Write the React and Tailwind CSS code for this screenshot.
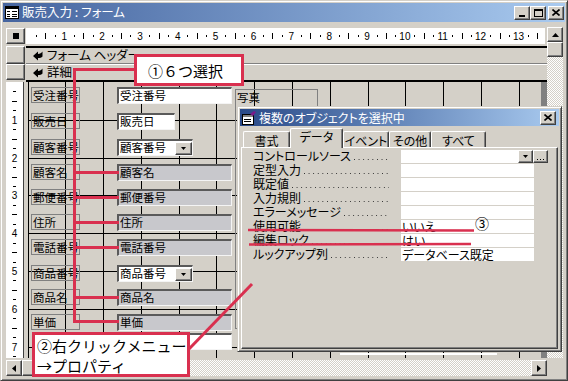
import React from "react";

const RAISED =
  "border border-t-white border-l-white border-r-[#404040] border-b-[#404040] shadow-[inset_-1px_-1px_0_#808080]";
const SUNKEN =
  "border-t-2 border-l-2 border-r border-b border-t-[#5a5a5a] border-l-[#5a5a5a] border-r-[#f4f4f4] border-b-[#f4f4f4]";
const CHECKER =
  "bg-[#d4d0c8] bg-[image:repeating-conic-gradient(#ffffff_0_25%,#d4d0c8_0_50%)] bg-[length:2px_2px]";
const RED = "#d9304f";

function Tri({ dir, s = 1 }) {
  const vert = dir === "up" || dir === "down";
  const w = vert ? 7 * s : 4 * s;
  const h = vert ? 4 * s : 7 * s;
  const d = {
    up: `M0 ${h} L${w / 2} 0 L${w} ${h} Z`,
    down: `M0 0 L${w} 0 L${w / 2} ${h} Z`,
    left: `M${w} 0 L${w} ${h} L0 ${h / 2} Z`,
    right: `M0 0 L0 ${h} L${w} ${h / 2} Z`,
  }[dir];
  return (
    <svg width={w} height={h} viewBox={`0 0 ${w} ${h}`}>
      <path d={d} fill="#000" />
    </svg>
  );
}

function FormIcon() {
  return (
    <svg width="14" height="13" viewBox="0 0 14 13">
      <rect x="0.5" y="0.5" width="13" height="12" fill="#fff" stroke="#000" />
      <rect x="1" y="1" width="12" height="2" fill="#000" />
      <path d="M2 5.5h3M2 8.5h3M2 10.5h3M7 5.5h5M7 8.5h5M7 10.5h5" stroke="#000" />
    </svg>
  );
}

function SheetIcon() {
  return (
    <svg width="16" height="14" viewBox="0 0 16 14">
      <rect x="1.5" y="3.5" width="11" height="10" fill="#fff" stroke="#000" />
      <rect x="2" y="4" width="10" height="2" fill="#808080" />
      <path d="M3 8.5h7M3 10.5h7" stroke="#000" />
      <path d="M9 3 L13 0 L15 1 L12 5 Z" fill="#7a1a8a" />
    </svg>
  );
}

function SecArrow() {
  return (
    <svg width="10" height="10" viewBox="0 0 10 10">
      <path d="M0 5 L5 0.5 L5 3 C7 3 8.5 2 9.5 0.5 L9.5 5.5 C8.5 7 7 7 5 7 L5 9.5 Z" fill="#000" />
    </svg>
  );
}

function HRuler() {
  const u = 37.85;
  const o = 0.4;
  const items = [];
  for (let k = 1; k <= 54; k++) {
    const x = o + (u * k) / 4;
    if (k % 4 === 0) {
      items.push(
        <text key={k} x={x} y={12} fontSize="10" textAnchor="middle" fontFamily="Liberation Sans, Arial, sans-serif" fill="#000">
          {k / 4}
        </text>
      );
    } else if (k % 2 === 0) {
      items.push(<rect key={k} x={Math.round(x)} y={5} width={1} height={6} fill="#000" />);
    } else {
      items.push(<rect key={k} x={Math.round(x)} y={7} width={1} height={2} fill="#000" />);
    }
  }
  return (
    <svg width="519" height="16" viewBox="0 0 519 16">
      {items}
    </svg>
  );
}

function VRuler() {
  const u = 37.8;
  const items = [];
  for (let k = 1; k <= 29; k++) {
    const y = (u * k) / 4;
    if (k % 4 === 0) {
      items.push(
        <text key={k} x={8.5} y={y + 4} fontSize="10" textAnchor="middle" fontFamily="Liberation Sans, Arial, sans-serif" fill="#000">
          {k / 4}
        </text>
      );
    } else if (k % 2 === 0) {
      items.push(<rect key={k} x={6} y={Math.round(y)} width={5} height={1} fill="#000" />);
    } else {
      items.push(<rect key={k} x={7} y={Math.round(y)} width={3} height={1} fill="#000" />);
    }
  }
  return (
    <svg width="17" height="276" viewBox="0 0 17 276">
      {items}
    </svg>
  );
}

function Grid() {
  const u = 37.8;
  const v = [];
  for (let n = 0; n <= 13; n++) {
    const x = Math.max(0, Math.round(-0.6 + u * n)) + 0.5;
    v.push(<path key={"v" + n} d={`M${x} 0 V276`} />);
  }
  for (let n = 1; n <= 7; n++) {
    const y = Math.round(u * n) + 0.5;
    v.push(<path key={"h" + n} d={`M0 ${y} H513`} />);
  }
  return (
    <svg className="absolute left-0 top-0" width="513" height="276" viewBox="0 0 513 276">
      <g stroke="#000" strokeWidth="1" shapeRendering="crispEdges">
        {v}
      </g>
    </svg>
  );
}

const rows = [
  { y: 5, t: "受注番号", w: 115, k: "white" },
  { y: 31, t: "販売日", w: 58, k: "white" },
  { y: 57, t: "顧客番号", w: 76, k: "combo" },
  { y: 82, t: "顧客名", w: 115, k: "gray" },
  { y: 107, t: "郵便番号", w: 115, k: "gray" },
  { y: 132, t: "住所", w: 115, k: "gray" },
  { y: 157, t: "電話番号", w: 115, k: "gray" },
  { y: 183, t: "商品番号", w: 76, k: "combo" },
  { y: 207, t: "商品名", w: 115, k: "gray" },
  { y: 232, t: "単価", w: 115, k: "gray" },
];

function TextBox({ y, w, k, t }) {
  const bg = k === "gray" ? "bg-[#c8c8cc]" : "bg-white";
  return (
    <div className={`absolute left-[89px] h-[17px] ${SUNKEN} ${bg} flex items-center`} style={{ top: y, width: w }}>
      <span className="pl-[1px] text-[11.5px] leading-none whitespace-nowrap">{t}</span>
      {k === "combo" && (
        <div className={`ml-auto w-[17px] h-[13px] bg-[#d4d0c8] ${RAISED} flex items-center justify-center`}>
          <svg width="5" height="3" viewBox="0 0 5 3">
            <path d="M0 0 H5 L2.5 3 Z" fill="#000" />
          </svg>
        </div>
      )}
    </div>
  );
}

const props = [
  ["コントロールソース", ""],
  ["定型入力", ""],
  ["既定値", ""],
  ["入力規則", ""],
  ["エラーメッセージ", ""],
  ["使用可能", "いいえ"],
  ["編集ロック", "はい"],
  ["ルックアップ列", "データベース既定"],
];

const tabs = [
  { t: "書式", w: 47 },
  { t: "データ", w: 53, sel: true },
  { t: "イベント", w: 46 },
  { t: "その他", w: 42 },
  { t: "すべて", w: 55 },
];

function Dialog() {
  return (
    <div className="absolute left-[236px] top-[105px] z-10 w-[325px] h-[246px] bg-[#d4d0c8] border border-t-[#d4d0c8] border-l-[#d4d0c8] border-r-[#404040] border-b-[#404040] shadow-[inset_1px_1px_0_#ffffff,inset_-1px_-1px_0_#808080] p-[2px] flex flex-col">
      <div className="h-[17px] flex items-center bg-linear-to-r from-[#2a4a88] to-[#a9caef] pl-[1px] pr-[3px]">
        <SheetIcon />
        <span className="ml-[2px] text-white text-[12px] leading-none whitespace-nowrap">複数のオブジェクトを選択中</span>
        <div className={`ml-auto w-[16px] h-[14px] bg-[#d4d0c8] ${RAISED} flex items-center justify-center`}>
          <svg width="8" height="7" viewBox="0 0 8 7">
            <path d="M0.5 0.5 L7.5 6.5 M7.5 0.5 L0.5 6.5" stroke="#000" strokeWidth="1.6" />
          </svg>
        </div>
      </div>
      <div className="mt-[2px] h-[19px] flex items-end pl-[3px] relative z-10">
        {tabs.map((tb) =>
          tb.sel ? (
            <div
              key={tb.t}
              className="h-[20px] -mb-[1px] bg-[#d4d0c8] border-t border-l border-r border-t-white border-l-white border-r-[#404040] shadow-[inset_-1px_0_0_#808080] rounded-t-[2px] flex items-start justify-center pt-[2px] text-[12px] leading-none"
              style={{ width: tb.w }}
            >
              {tb.t}
            </div>
          ) : (
            <div
              key={tb.t}
              className="h-[16px] bg-[#d4d0c8] border-t border-l border-r border-t-white border-l-white border-r-[#404040] shadow-[inset_-1px_0_0_#808080] rounded-t-[2px] flex items-center justify-center pt-[2px] text-[12px] leading-none"
              style={{ width: tb.w }}
            >
              {tb.t}
            </div>
          )
        )}
      </div>
      <div className={`flex-1 mx-[1px] ${RAISED} bg-[#d4d0c8] pt-[1px]`}>
        {props.map(([label, val], i) => (
          <div key={label} className="h-[14px] flex items-center">
            <div className="w-[159px] h-[14px] pl-[11px] pr-[12px] flex items-center">
              <span className="text-[12px] leading-none whitespace-nowrap">{label}</span>
              <div className="flex-1 self-end mb-[3px] ml-[3px] h-[1px] bg-[image:linear-gradient(to_right,#303030_1px,transparent_1px)] bg-[length:4.6px_1px]" />
            </div>
            {i === 0 ? (
              <div className="flex h-[13px]">
                <div className="w-[117px] h-[13px] bg-white" />
                <div className={`w-[15px] h-[13px] bg-[#d4d0c8] ${RAISED} flex items-center justify-center`}>
                  <svg width="5" height="3" viewBox="0 0 5 3">
                    <path d="M0 0 H5 L2.5 3 Z" fill="#000" />
                  </svg>
                </div>
                <div className={`w-[15px] h-[13px] bg-[#d4d0c8] ${RAISED} flex items-end justify-center pb-[2px]`}>
                  <svg width="7" height="1" viewBox="0 0 7 1">
                    <path d="M0 0h1v1H0zM3 0h1v1H3zM6 0h1v1H6z" fill="#000" />
                  </svg>
                </div>
              </div>
            ) : (
              <div className="w-[133px] h-[13px] bg-white text-[12px] leading-[13px] pl-[1px] whitespace-nowrap">{val}</div>
            )}
          </div>
        ))}
      </div>
    </div>
  );
}

export default function App() {
  return (
    <div className="relative w-[568px] h-[381px] overflow-hidden bg-[#d4d0c8] p-[2px] flex flex-col font-['Noto_Sans_CJK_JP','Noto_Sans',sans-serif] [font-feature-settings:'palt'] text-black border border-t-[#d4d0c8] border-l-[#d4d0c8] border-r-[#404040] border-b-[#404040] shadow-[inset_1px_1px_0_#ffffff,inset_-1px_-1px_0_#808080]">
      {/* title bar */}
      <div className="h-[19px] flex items-center bg-linear-to-r from-[#46659f] to-[#a9caef] pl-[2px] pr-[1px]">
        <FormIcon />
        <span className="ml-[3px] text-white text-[12.5px] leading-none whitespace-nowrap">販売入力 : フォーム</span>
        <div className="ml-auto flex items-center">
          <div className={`w-[16px] h-[14px] bg-[#d4d0c8] ${RAISED} flex items-end justify-center pb-[2px]`}>
            <div className="w-[6px] h-[2px] bg-black" />
          </div>
          <div className={`w-[16px] h-[14px] bg-[#d4d0c8] ${RAISED} flex items-center justify-center`}>
            <div className="w-[9px] h-[8px] border border-black border-t-2" />
          </div>
          <div className={`ml-[2px] w-[16px] h-[14px] bg-[#d4d0c8] ${RAISED} flex items-center justify-center`}>
            <svg width="8" height="7" viewBox="0 0 8 7">
              <path d="M0.5 0.5 L7.5 6.5 M7.5 0.5 L0.5 6.5" stroke="#000" strokeWidth="1.6" />
            </svg>
          </div>
        </div>
      </div>

      {/* body */}
      <div className="flex-1 flex flex-col pl-[3px] pr-[2px] pt-[5px]">
        <div className="h-[331px] flex">
          {/* main column */}
          <div className="w-[541px] flex flex-col">
            <div className="h-[19px] flex items-start pt-[1px]">
              <div className={`w-[19px] h-[16px] bg-[#d4d0c8] ${RAISED} flex items-center justify-center`}>
                <div className="w-[6px] h-[6px] bg-black" />
              </div>
              <div className="ml-[1px] w-[519px] h-[16px] bg-white">
                <HRuler />
              </div>
            </div>
            <div className="h-[18px] flex">
              <div className={`w-[19px] h-[18px] bg-[#d4d0c8] ${RAISED}`} />
              <div className="ml-[1px] flex-1 border-t-2 border-b border-t-black border-b-[#808080] flex items-center pl-[7px]">
                <SecArrow />
                <span className="ml-[4px] text-[12.5px] leading-none whitespace-nowrap">フォーム ヘッダー</span>
              </div>
            </div>
            <div className="h-[18px] flex">
              <div className={`w-[19px] h-[16px] bg-[#d4d0c8] ${RAISED}`} />
              <div className="ml-[1px] flex-1 border-t border-b-2 border-t-white border-b-black flex items-center pl-[7px]">
                <SecArrow />
                <span className="ml-[4px] text-[12.5px] leading-none whitespace-nowrap">詳細</span>
              </div>
            </div>
            <div className="h-[276px] flex">
              <div className="w-[18px] h-[276px] bg-white border-r border-r-[#404040]">
                <VRuler />
              </div>
              <div className="w-[4px]" />
              <div className="relative w-[513px] h-[276px] bg-[#d4d0c8] overflow-hidden">
                <Grid />
                {rows.map((r) => (
                  <div
                    key={r.t}
                    className="absolute left-[3px] h-[16px] w-[49px] border border-[#808080] pl-[1px] text-[11.5px] leading-[14px] whitespace-nowrap overflow-hidden"
                    style={{ top: r.y }}
                  >
                    {r.t}
                  </div>
                ))}
                {rows.map((r) => (
                  <TextBox key={"tb" + r.t} {...r} />
                ))}
                <TextBox y={251} w={115} k="white" t="" />
                <div className="absolute left-[207px] top-[7px] w-[83px] h-[240px] border border-[#808080] pl-[1px] text-[11.5px] leading-[14px]">
                  写真
                </div>
                <div className="absolute left-[312px] top-[271px] w-[157px] h-[2px] bg-white" />
              </div>
              <div className="w-[6px] h-[276px] bg-[#808080]" />
            </div>
          </div>
          {/* vertical scrollbar */}
          <div className="w-[16px] flex flex-col">
            <div className={`h-[15px] bg-[#d4d0c8] ${RAISED} flex items-center justify-center`}>
              <Tri dir="up" />
            </div>
            <div className={`h-[15px] bg-[#d4d0c8] ${RAISED}`} />
            <div className={`flex-1 ${CHECKER}`} />
          </div>
        </div>
        {/* horizontal scrollbar */}
        <div className="mt-[2px] h-[16px] flex">
          <div className="w-[541px] flex">
            <div className={`w-[16px] h-[16px] bg-[#d4d0c8] ${RAISED} flex items-center justify-center`}>
              <Tri dir="left" />
            </div>
            <div className={`w-[15px] h-[16px] bg-[#d4d0c8] ${RAISED}`} />
            <div className={`flex-1 ${CHECKER}`} />
            <div className={`w-[16px] h-[16px] bg-[#d4d0c8] ${RAISED} flex items-center justify-center`}>
              <Tri dir="right" />
            </div>
          </div>
          <div className="w-[16px]" />
        </div>
      </div>

      <Dialog />

      {/* annotations */}
      <svg className="absolute left-0 top-0 z-20 pointer-events-none" width="568" height="381" viewBox="0 0 568 381">
        <g stroke={RED} strokeWidth="3" fill="none">
          <path d="M73.5 68.5 H134" />
          <path d="M73.5 67 V322" />
          {[171.5, 196.5, 221.5, 246.5, 296.5, 320.5].map((y) => (
            <path key={y} d={`M72 ${y} H118`} />
          ))}
          <path d="M188 348 L251 283" />
        </g>
        <g stroke={RED} strokeWidth="2.5" fill="none">
          <path d="M247 229 L473 229.5" />
          <path d="M248 243.5 L470 243" />
        </g>
      </svg>
      <div className="absolute left-[474px] top-[215px] z-20 text-[14px] leading-none">③</div>

      <div className="absolute left-[133px] top-[53px] z-30 w-[110px] h-[32px] bg-white border-[3px] border-[#d9304f] flex items-center pl-[11px] text-[15px] leading-none [font-feature-settings:normal] whitespace-nowrap">
        ①６つ選択
      </div>
      <div className="absolute left-[31px] top-[331px] z-30 w-[158px] h-[45px] bg-white border-[3px] border-[#d9304f] pl-[2px] pt-[1px] text-[15px] leading-[20px] [font-feature-settings:normal] whitespace-nowrap">
        <div>②右クリックメニュー</div>
        <div>→プロパティ</div>
      </div>
    </div>
  );
}
